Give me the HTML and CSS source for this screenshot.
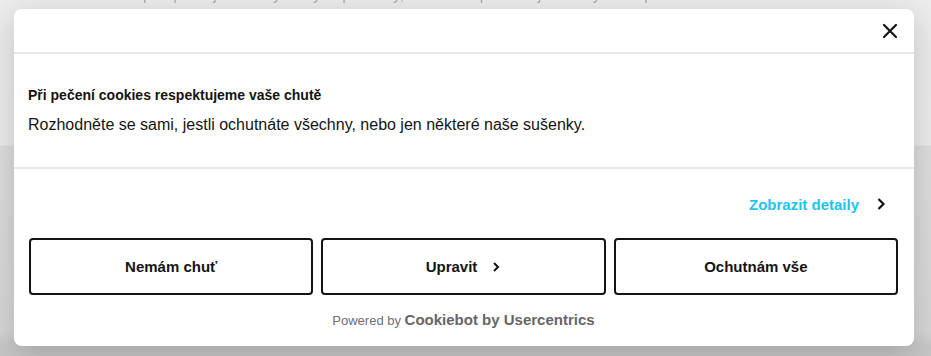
FILE: index.html
```html
<!DOCTYPE html>
<html lang="cs">
<head>
  <meta charset="UTF-8">
  <meta name="viewport" content="width=device-width, initial-scale=1.0">
  <title>Cookies</title>
  <link rel="stylesheet" href="styles.css">
</head>
<body>
  <div class="backdrop-text">Spolupracujeme s vybranými partnery, kteří nám pomáhají s analýzou a personalizací obsahu</div>
  <div class="dialog">
    <div class="dialog-header">
      <button class="close-button" aria-label="Zavřít">
        <svg width="16" height="16" viewBox="0 0 16 16">
          <path d="M2 2 L14 14 M14 2 L2 14" stroke="#141414" stroke-width="2.2" stroke-linecap="round" fill="none"/>
        </svg>
      </button>
    </div>
    <div class="dialog-body">
      <h2>Při pečení cookies respektujeme vaše chutě</h2>
      <p>Rozhodněte se sami, jestli ochutnáte všechny, nebo jen některé naše sušenky.</p>
    </div>
    <div class="dialog-footer">
      <div class="details-row">
        <a href="#" class="details-link">Zobrazit detaily</a>
        <svg class="chevron" width="10" height="14" viewBox="0 0 10 14">
          <path d="M2.5 2 L7.5 7 L2.5 12" stroke="#141414" stroke-width="2.2" fill="none"/>
        </svg>
      </div>
      <div class="button-row">
        <button class="choice">Nemám chuť</button>
        <button class="choice">Upravit
          <svg class="chevron-small" width="10" height="12" viewBox="0 0 10 12">
            <path d="M3 2 L7 6 L3 10" stroke="#141414" stroke-width="2" fill="none"/>
          </svg>
        </button>
        <button class="choice">Ochutnám vše</button>
      </div>
      <div class="powered">Powered by <strong>Cookiebot by Usercentrics</strong></div>
    </div>
  </div>
</body>
</html>
```

FILE: styles.css
```css
body {
  margin: 0;
  height: 356px;
  overflow: hidden;
  font-family: 'Liberation Sans', Arial, sans-serif;
  color: #141414;
  background: linear-gradient(#ececec 0, #ebebeb 145px, #dddddd 146px, #d6d6d6 330px, #c6c6c6 347px, #c6c6c6 100%);
  padding: 0 17px 0 14px;
}

.backdrop-text {
  height: 14px;
  margin-top: -5px;
  line-height: 0;
  text-align: center;
  font-size: 16px;
  color: #a8a8a8;
  filter: blur(0.6px);
  overflow: hidden;
  white-space: nowrap;
}

.dialog {
  background: #fff;
  border-radius: 8px;
  box-shadow: 0 8px 32px rgba(0, 0, 0, 0.18);
  height: 337px;
  display: flex;
  flex-direction: column;
}

.dialog-header {
  height: 43px;
  display: flex;
  align-items: center;
  justify-content: flex-end;
  padding: 0 12px 0 14px;
  border-bottom: 2px solid #e8e8e8;
}

.close-button {
  background: none;
  border: none;
  padding: 4px;
  display: flex;
  cursor: pointer;
}

.dialog-body {
  padding: 31px 14px 32px;
  border-bottom: 2px solid #e8e8e8;
}

.dialog-body h2 {
  margin: 0;
  font-size: 14px;
  font-weight: bold;
  line-height: 20px;
}

.dialog-body p {
  margin: 10px 0 0 0;
  font-size: 16px;
  line-height: 20px;
}

.dialog-footer {
  padding: 25px 16px 0 15px;
}

.details-row {
  display: flex;
  align-items: center;
  justify-content: flex-end;
  gap: 17px;
  padding-right: 12px;
  height: 20px;
}

.details-link {
  color: #1ec3f0;
  font-weight: bold;
  font-size: 15px;
  text-decoration: none;
}

.button-row {
  display: grid;
  grid-template-columns: repeat(3, 1fr);
  gap: 8px;
  margin-top: 24px;
}

.choice {
  height: 57px;
  background: #fff;
  border: 2px solid #141414;
  border-radius: 4px;
  font-family: inherit;
  font-size: 15px;
  font-weight: bold;
  color: #141414;
  display: flex;
  align-items: center;
  justify-content: center;
  gap: 14px;
  cursor: pointer;
}

.powered {
  margin-top: 15px;
  text-align: center;
  font-size: 13px;
  line-height: 20px;
  color: #6f6f6f;
}

.powered strong {
  font-size: 15px;
  color: #666;
}
```
